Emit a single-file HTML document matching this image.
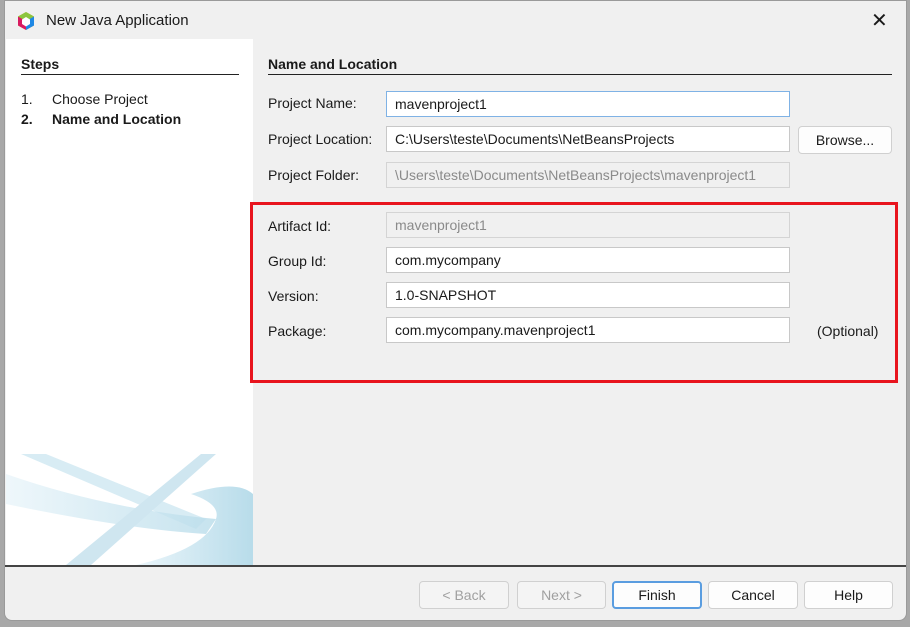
<!DOCTYPE html>
<html><head><style>
*{box-sizing:border-box;margin:0;padding:0}
body{width:910px;height:627px;background:#a8a8a8;position:relative;overflow:hidden;font-family:"Liberation Sans",sans-serif;font-size:14px;color:#1a1a1a}
.win{position:absolute;left:4px;top:0;width:903px;height:621px;background:#f0f0f0;border:1px solid #9a9a9a;border-radius:0 0 8px 8px;overflow:hidden}
.a{position:absolute;white-space:nowrap}
.f{position:absolute;left:381px;width:404px;height:26px;background:#fff;border:1px solid #c8c8c8;padding-left:8px;line-height:24px}
.f.d{background:#f0f0f0;color:#8a8a8a;border-color:#d4d4d4}
.btn{position:absolute;top:580px;height:28px;background:#fdfdfd;border:1px solid #d0d0d0;border-radius:4px;text-align:center;line-height:26px}
</style></head><body>
<div class="win">
 <svg class="a" style="left:11px;top:10px" width="20" height="20" viewBox="0 0 20 20"><polygon points="10,1 18,5.5 18,14.5 10,19 2,14.5 2,5.5" fill="#e8b820"/><polygon points="10,1 18,5.5 10,10 2,5.5" fill="#8cc63f"/><polygon points="2,5.5 10,10 10,19 2,14.5" fill="#d81b60"/><polygon points="10,10 18,5.5 18,14.5 10,19" fill="#1e88e5"/><polygon points="10,6 14,8.5 14,13 10,15.5 6,13 6,8.5" fill="#fff"/></svg>
 <div class="a" style="left:41px;top:11px;font-size:15px">New Java Application</div>
 <div class="a" style="left:866px;top:7px;font-size:20px;font-weight:300">✕</div>
 <div class="a" style="left:1px;top:38px;width:247px;height:526px;background:#fff;overflow:hidden">
  <div class="a" style="left:15px;top:17px;font-weight:bold">Steps</div>
  <div class="a" style="left:15px;top:35px;width:218px;height:1px;background:#222"></div>
  <div class="a" style="left:15px;top:52px">1.</div><div class="a" style="left:46px;top:52px">Choose Project</div>
  <div class="a" style="left:15px;top:72px;font-weight:bold">2.</div><div class="a" style="left:46px;top:72px;font-weight:bold">Name and Location</div>
  <svg class="a" style="left:0;top:410px" width="247" height="116" viewBox="0 0 247 116">
   <defs><linearGradient id="g" x1="0" x2="1"><stop offset="0" stop-color="#eaf5fa"/><stop offset="1" stop-color="#b8dcea"/></linearGradient></defs>
   <path d="M15 5 L40 5 L200 70 L190 80 Z" fill="#d8ecf4"/>
   <path d="M0 25 L0 55 Q120 80 200 85 L210 70 Q100 60 0 25Z" fill="url(#g)" opacity=".8"/>
   <path d="M60 116 L195 5 L210 5 L85 116Z" fill="#cfe6f0"/>
   <path d="M185 45 Q230 30 247 45 L247 116 L130 116 Q200 100 210 70 Q215 55 185 45Z" fill="url(#g)"/>
  </svg>
 </div>
 <div class="a" style="left:263px;top:55px;font-weight:bold">Name and Location</div>
 <div class="a" style="left:263px;top:73px;width:624px;height:1px;background:#222"></div>
 <div class="a" style="left:263px;top:94px">Project Name:</div><div class="f" style="top:90px;border-color:#7fb2e5">mavenproject1</div>
 <div class="a" style="left:263px;top:130px">Project Location:</div><div class="f" style="top:125px">C:\Users\teste\Documents\NetBeansProjects</div>
 <div class="btn" style="left:793px;top:125px;width:94px">Browse...</div>
 <div class="a" style="left:263px;top:166px">Project Folder:</div><div class="f d" style="top:161px">\Users\teste\Documents\NetBeansProjects\mavenproject1</div>
 <div class="a" style="left:263px;top:217px">Artifact Id:</div><div class="f d" style="top:211px">mavenproject1</div>
 <div class="a" style="left:263px;top:252px">Group Id:</div><div class="f" style="top:246px">com.mycompany</div>
 <div class="a" style="left:263px;top:287px">Version:</div><div class="f" style="top:281px">1.0-SNAPSHOT</div>
 <div class="a" style="left:263px;top:322px">Package:</div><div class="f" style="top:316px">com.mycompany.mavenproject1</div>
 <div class="a" style="left:812px;top:322px">(Optional)</div>
 <div class="a" style="left:245px;top:201px;width:648px;height:181px;border:3px solid #e8141e"></div>
 <div class="a" style="left:0;top:564px;width:903px;height:2px;background:#444"></div>
 <div class="btn" style="left:414px;width:90px;color:#a0a0a0;background:#f4f4f4">&lt; Back</div>
 <div class="btn" style="left:512px;width:89px;color:#a0a0a0;background:#f4f4f4">Next &gt;</div>
 <div class="btn" style="left:607px;width:90px;border:2px solid #5a9de0;line-height:24px">Finish</div>
 <div class="btn" style="left:703px;width:90px">Cancel</div>
 <div class="btn" style="left:799px;width:89px">Help</div>
</div>
</body></html>
